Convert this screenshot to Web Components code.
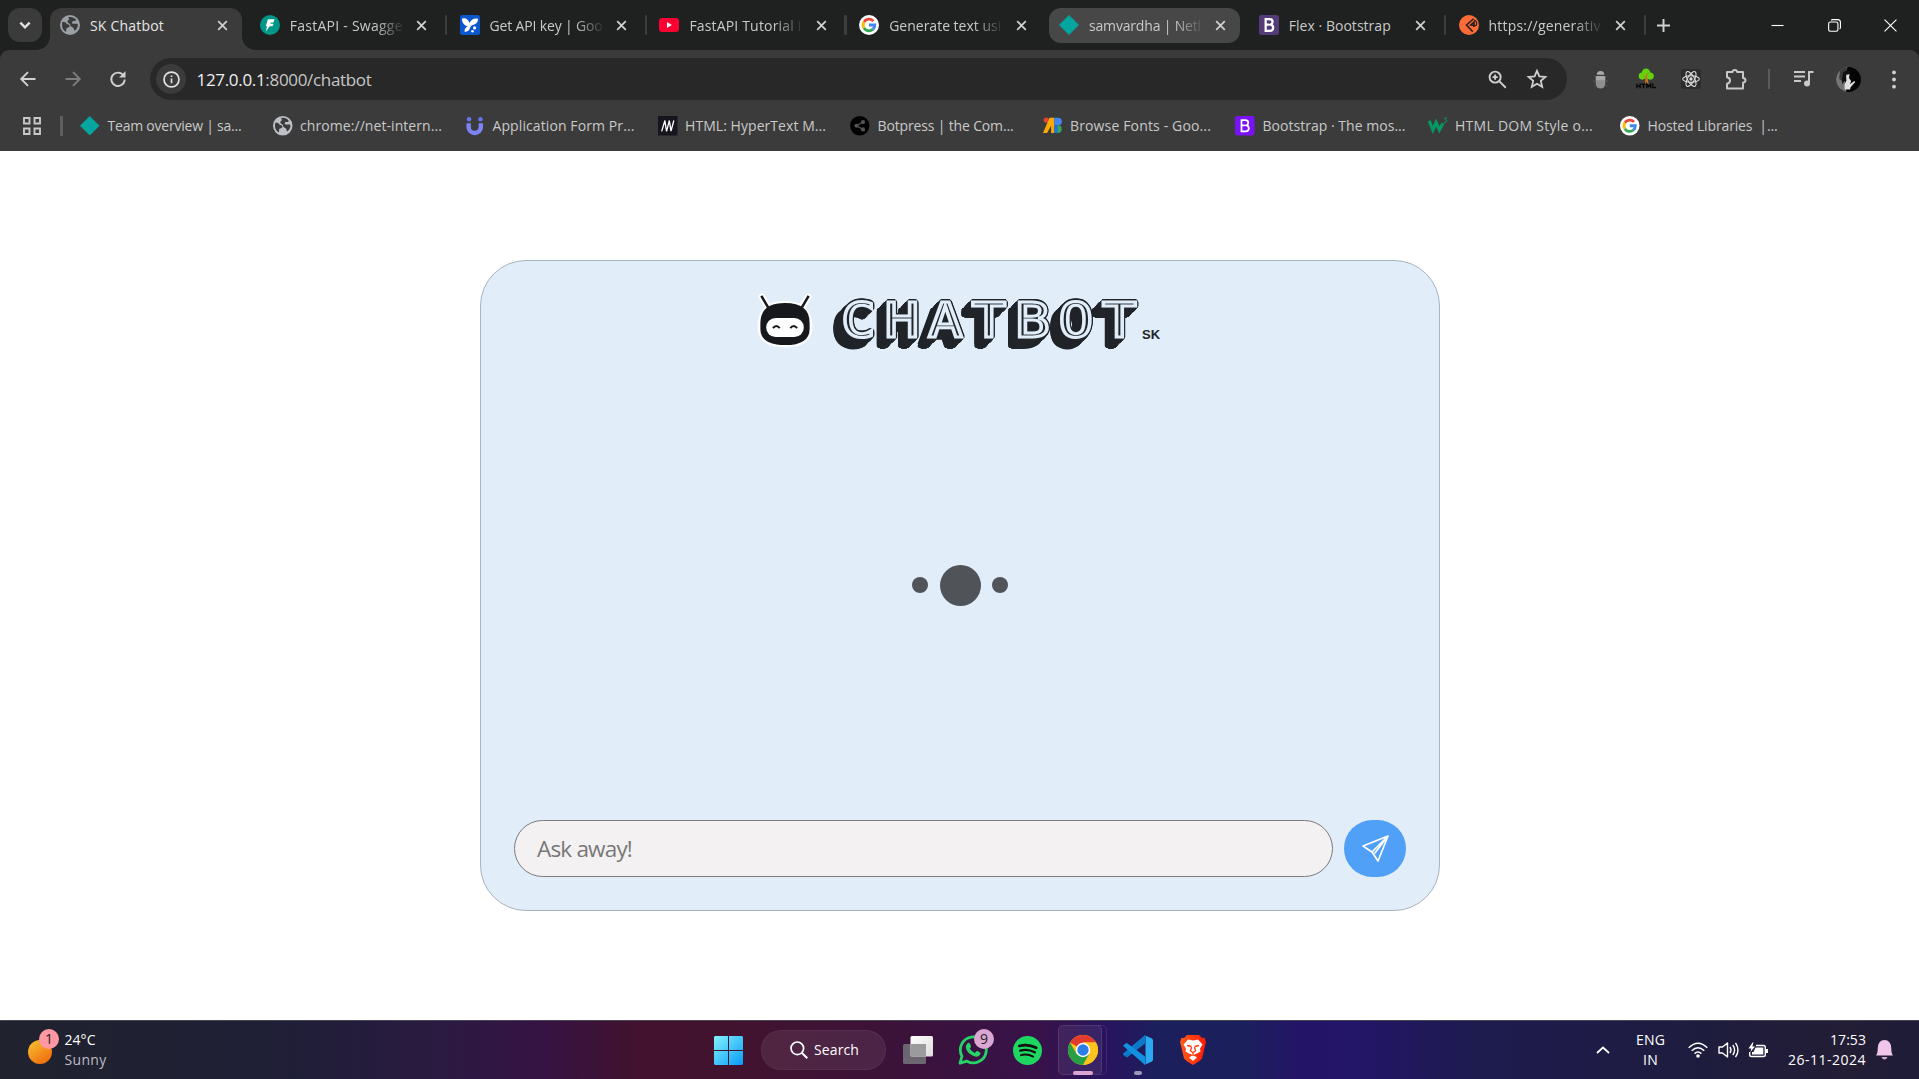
<!DOCTYPE html>
<html lang="en">
<head>
<meta charset="utf-8">
<title>SK Chatbot</title>
<style>
html,body{margin:0;height:100%;background:#fff;overflow:hidden}
body{font-family:"Open Sans","Noto Sans",sans-serif}
</style>
</head>
<body>
<desktop-screen></desktop-screen>
<script>
const S = (vb, body) => `<svg viewBox="${vb}" fill="none" xmlns="http://www.w3.org/2000/svg">${body}</svg>`;
const G = `<circle cx="12" cy="12" r="12" fill="#fff"/><g fill="none" stroke-width="3.4"><path d="M17.2 7.3A7 7 0 0 0 6 8.4" stroke="#ea4335"/><path d="M6 8.4a7 7 0 0 0 0 7.2" stroke="#fbbc05"/><path d="M6 15.6a7 7 0 0 0 10.6 1.7" stroke="#34a853"/><path d="M12 12h6.9a7 7 0 0 1-2.3 5.3" stroke="#4285f4"/></g>`;
const globe = c => `<circle cx="12" cy="12" r="12" fill="${c}"/><path d="M3 8c3 0 4 1 5 2.500s3 .5 3.500 2-1 2.500-3 3 0 4-1.500 4.500C3 18 1.500 13 3 8zM10 2.500c4-.8 7.500.6 9.500 3.500-1.500 2-2.500 1-4 1.500s-1.500 2.500 0 3 4-.5 6 .5c.2 3-1.500 6.500-4 8-1-1-.5-3-2-4s-3-1-3-3-3-2-3.500-4 2-2 2-3z" fill="#3b3b3b"/>`;
const ICONS = {
 down: S('0 0 12 12','<path d="M2 4l4 4 4-4" stroke="#e3e3e3" stroke-width="2"/>'),
 x: S('0 0 12 12','<path d="M1.300 1.300l9.400 9.400M10.700 1.300l-9.400 9.400" stroke="#d0d0d0" stroke-width="1.900"/>'),
 plus: S('0 0 12 12','<path d="M6 0v12M0 6h12" stroke="#d0d0d0" stroke-width="1.800"/>'),
 min: S('0 0 14 14','<path d="M.5 7h13" stroke="#fff" stroke-width="1.200"/>'),
 max: S('0 0 14 14','<rect x=".7" y="3.200" width="10" height="10" rx="1.800" stroke="#fff" stroke-width="1.200"/><path d="M3.500 1.500Q4 .7 5 .7h5.500a3 3 0 0 1 2.900 3V9q0 1.200-.8 1.700" stroke="#fff" stroke-width="1.200"/>'),
 winx: S('0 0 14 14','<path d="M.6.6l12.800 12.800M13.400.6L.6 13.400" stroke="#fff" stroke-width="1.200"/>'),
 globeA: S('0 0 24 24',globe('#9aa0a6')), globeB: S('0 0 24 24',globe('#bdc1c6')),
 fast: S('0 0 24 24','<circle cx="12" cy="12" r="12" fill="#009688"/><path d="M9.500 5h8l-1.500 4h-3l-.5 1.500h4L15 13.500h-3.500L7 20l1.500-6.500H7z" fill="#fff"/>'),
 apikey: S('0 0 24 24','<rect width="24" height="24" rx="3" fill="#0b57d0"/><path d="M2.500 4.500C6 3 10 5 11.500 9.500 13 6 17 3 21.500 4.500c.5 4-2.500 7-6.500 7.500-1.500.5-2.500 2-3 3.500-1 3.500-3.500 5-6.500 4.500-.5-2.500 1-5 4-6.500C5.500 13 2 9 2.500 4.500z" fill="#fff"/><circle cx="17.500" cy="15.500" r="1.900" fill="#fff"/><circle cx="15" cy="19.500" r="1.500" fill="#fff"/>'),
 yt: S('0 0 24 24','<rect y="3.500" width="24" height="17" rx="4" fill="#ff0033"/><path d="M9.500 8.500v7l6-3.500z" fill="#fff"/>'),
 g: S('0 0 24 24',G),
 teal: S('0 0 24 24','<path d="M12 .5L23.500 12 12 23.500.5 12z" fill="#05a5a0" stroke="#05a5a0" stroke-linejoin="round"/>'),
 b1: S('0 0 24 24','<rect width="24" height="24" rx="3" fill="#533b78"/><path d="M8 5h4.500q3.800 0 3.800 3.200 0 2.500-2.300 3.300 3 .6 3 3.700 0 3.800-4.300 3.800H8zM8 11.600h4M12.600 5" stroke="#fff" stroke-width="2.700"/>'),
 b2: S('0 0 24 24','<rect width="24" height="24" rx="3" fill="#7a12f8"/><path d="M8 5h4.500q3.800 0 3.800 3.200 0 2.500-2.300 3.300 3 .6 3 3.700 0 3.800-4.300 3.800H8zM8 11.600h4" stroke="#fff" stroke-width="2.200"/>'),
 orange: S('0 0 24 24','<circle cx="12" cy="12" r="12" fill="#ff6c37"/><path d="M17.500 4.500L9 12l7.500 8M14 12l4-3.500v4z" stroke="#26201e" stroke-width="1.900"/><path d="M18 6q4 1 3 6l-4 2" stroke="#26201e" stroke-width="1.500"/>'),
 back: S('0 0 16 16','<path d="M15.500 8H1.500M8 1.200L1.200 8 8 14.800" stroke="#d0d0d0" stroke-width="1.900"/>'),
 fwd: S('0 0 16 16','<path d="M.5 8h14M8 1.200L14.800 8 8 14.800" stroke="#7d7d7d" stroke-width="1.900"/>'),
 reload: S('0 0 16 16','<path d="M13.600 4.600A6.700 6.700 0 1 0 14.700 8.500" stroke="#d0d0d0" stroke-width="1.900"/><path d="M15.500 0v6.500H9z" fill="#d0d0d0"/>'),
 info: S('0 0 18 18','<circle cx="9" cy="9" r="7.900" stroke="#e3e3e3" stroke-width="1.800"/><path d="M9 8v5M9 4.700v1.700" stroke="#e3e3e3" stroke-width="1.700"/>'),
 zoom: S('0 0 20 20','<circle cx="7.500" cy="7.500" r="5.800" stroke="#d0d0d0" stroke-width="2"/><path d="M12 12l6.700 6.700M7.500 4.700v5.600M4.700 7.500h5.600" stroke="#d0d0d0" stroke-width="2"/>'),
 star: S('0 0 20 20','<path d="M10 1.800l2.400 5.600 6 .5-4.600 4 1.400 5.900L10 14.700l-5.200 3.100 1.400-5.900-4.600-4 6-.5z" stroke="#d0d0d0" stroke-width="1.800"/>'),
 bug: S('0 0 24 24','<g stroke="#5c5c5c" stroke-width="1"><path d="M4 7l4 4M20 7l-4 4M2 14h6M22 14h-6M4 21l4-4M20 21l-4-4"/></g><path d="M7.300 6a4.700 4.700 0 0 1 9.400 0z" fill="#aaa"/><rect x="6" y="7.500" width="12" height="16" rx="6" fill="#8e8e8e"/><path d="M6 9q0-1.500 1.500-1.500h9Q18 7.500 18 9v4H6z" fill="#a8a8a8"/>'),
 tree: S('0 0 24 24','<path d="M11 10h3l1 8h-4z" fill="#c4771e"/><g fill="#62d40b"><circle cx="12" cy="4.500" r="5"/><circle cx="7.500" cy="8.500" r="4.300"/><circle cx="17" cy="8.500" r="4.300"/></g><path d="M12.500 14V7l3-2M12.500 11L9 8" stroke="#c4771e" stroke-width="1.300"/><g stroke="#080808" stroke-width="1.700"><path d="M1 17.500v5.500M5 17.500v5.500M1 20.300h4M6.500 18.300h5M9 18v5M13 23v-5l2.200 3 2.300-3v5M20 17.500v4.700h4"/></g>'),
 react: S('0 0 24 24','<rect width="24" height="24" rx="3" fill="#2d2d2d"/><g stroke="#ddd" stroke-width="1.300"><ellipse cx="12" cy="12" rx="10" ry="4"/><ellipse cx="12" cy="12" rx="10" ry="4" transform="rotate(60 12 12)"/><ellipse cx="12" cy="12" rx="10" ry="4" transform="rotate(120 12 12)"/></g><circle cx="12" cy="12" r="2" fill="#ddd"/>'),
 puzzle: S('0 0 22 22','<path d="M2 4h5.500q.2-2 2.300-2t2.300 2H18v6q2.500.3 2.500 2.300T18 14.800V20.500H2v-4.800q3-.5 3-3.200t-3-3.200z" stroke="#c8c8c8" stroke-width="2" stroke-linejoin="round"/>'),
 music: S('0 0 20 20','<path d="M0 3h11M0 7.500h11M0 12h7" stroke="#c8c8c8" stroke-width="2"/><path d="M15 14.500V3h4.500" stroke="#c8c8c8" stroke-width="2"/><circle cx="13" cy="14.500" r="3" fill="#c8c8c8"/>'),
 avatar: S('0 0 24 24','<defs><clipPath id="c"><circle cx="12" cy="12" r="12"/></clipPath></defs><g clip-path="url(#c)"><path d="M0 0h24v24H0z" fill="#050505"/><path d="M0 0h11L8 10l2 14H0z" fill="#747474"/><path d="M4 3q3-3 7-2l-3 5-2 8-3-3z" fill="#3a3a3a"/><path d="M9.500 6.500q2.500-1.500 3.500.5l-.5 3.500 2 3-1 3 4-3 1 1-4.500 5-.5 2H8.500q-1-5 1.500-8.500z" fill="#e0e0e0"/><path d="M7 5q3-3 6.500-.5l-.5 2.500-3 .5-1 5-3 4q-1-6 1-11.500z" fill="#111"/></g>'),
 dots: S('0 0 4 20','<g fill="#d0d0d0"><circle cx="2" cy="2.500" r="2"/><circle cx="2" cy="10" r="2"/><circle cx="2" cy="17.500" r="2"/></g>'),
 grid: S('0 0 18 18','<g stroke="#c8c8c8" stroke-width="1.900"><path d="M1 1h5.500v5.500H1zM11.500 1H17v5.500h-5.500zM1 11.500h5.500V17H1zM11.500 11.500H17V17h-5.500z"/></g>'),
 u: S('0 0 24 24','<path d="M4.500 9v4.500a7.500 7.500 0 0 0 15 0V9" stroke="#7b83f5" stroke-width="5.500"/><circle cx="5" cy="4" r="2.800" fill="#6673f0"/><circle cx="19" cy="4" r="2.800" fill="#6673f0"/>'),
 m: S('0 0 24 24','<path d="M0 0h24v24H0z" fill="#15141f"/><path d="M4.500 19L8.500 5.500M10.500 19L14 5.500M16 18.500L19.500 5.500M8.500 6l2 13M14 6l2 12.500" stroke="#fff" stroke-width="1.600"/>'),
 bot: S('0 0 24 24','<circle cx="12" cy="12" r="12" fill="#000"/><path d="M15 8l-7 4 7 4" stroke="#555" stroke-width="1.500"/><g fill="#555"><circle cx="16" cy="7.500" r="2.600"/><circle cx="8" cy="12" r="2.600"/><circle cx="16" cy="16.500" r="2.600"/></g>'),
 fonts: S('0 0 24 24','<circle cx="4" cy="5" r="3.200" fill="#ea4335"/><path d="M8 2h6v19h-4V12L5 21H0z" fill="#fbaa05"/><path d="M14 2h4.500a4.500 4.500 0 0 1 0 9.500H14z" fill="#4285f4"/><path d="M14 11.500h4.500a5 5 0 0 1 0 9.500H14z" fill="#1a73e8"/><path d="M18 11a5 5 0 0 1 0 10z" fill="#34a853"/>'),
 w3: S('0 0 24 24','<path d="M1.500 6l4.500 11 4-9 4 9 4.500-8" stroke="#059862" stroke-width="4"/><path d="M19.500 2.500H23l-2 2q2 0 2 2t-3.500 1.300" stroke="#059862" stroke-width="1.200"/>'),
 send: S('0 0 27 27','<path d="M26 1L1 11l9 6 6 9zM10 17L26 1L12.500 18.500" stroke="#fff" stroke-width="1.700" stroke-linejoin="round"/>'),
 robot: S('0 0 58 58','<g stroke="#fff" stroke-width="7" stroke-linejoin="round" stroke-linecap="round" opacity=".9"><path d="M5 5l6 10M53 5l-6 10"/><path d="M4 36q0-23.500 25-23.500t25 23.500q0 18-25 18T4 36z"/></g><path d="M4.500 4l7 12M53.500 4l-7 12" stroke="#17181b" stroke-width="2.600"/><path d="M3.500 32q0-20.500 25.500-20.500t25.500 20.500v6q0 17-25.500 17T3.500 38z" fill="#17181b"/><rect x="9.500" y="27" width="39" height="19.500" rx="9.700" fill="#fff"/><path d="M16.500 37.500q3.500-4.500 7 0M34.500 37.500q3.500-4.500 7 0" stroke="#17181b" stroke-width="2"/>'),
 sun: S('0 0 24 24','<defs><linearGradient id="s" x1="0" y1="0" x2=".7" y2="1"><stop stop-color="#f8c535"/><stop offset="1" stop-color="#ef6c0c"/></linearGradient></defs><circle cx="12" cy="12" r="12" fill="url(#s)"/>'),
 win: S('0 0 29 29','<defs><linearGradient id="w" x1="0" y1="0" x2="1" y2="1"><stop stop-color="#84f1fd"/><stop offset="1" stop-color="#079cf8"/></linearGradient></defs><path d="M1 0h13v14H0V1zM15 0h13l1 1v13H15zM0 15h14v14H1l-1-1zM15 15h14v13l-1 1H15z" fill="url(#w)"/>'),
 loupe: S('0 0 18 18','<circle cx="7.300" cy="7.300" r="6.300" stroke="#fff" stroke-width="1.700"/><path d="M12 12l5.300 5.300" stroke="#fff" stroke-width="2"/>'),
 task: S('0 0 30 28','<defs><linearGradient id="t" x1="0" y1="0" x2="1" y2="1"><stop stop-color="#fff"/><stop offset="1" stop-color="#ddd"/></linearGradient></defs><rect x="0" y="8" width="23" height="20" rx="1.500" fill="#6b6670"/><rect x="7.500" y="0" width="22.500" height="20.500" rx="1.500" fill="url(#t)"/><path d="M7.500 8H23v12.500H7.500z" fill="#9b9b9d"/>'),
 wa: S('0 0 30 30','<path d="M2 28.200l2-7A13 13 0 1 1 9 26.200z" stroke="#25d366" stroke-width="2.800" stroke-linejoin="round"/><path d="M9.200 8.500q1.800-1.500 2.800.2l1 2.700q0 1-1.200 2 1.700 3.300 5 4.500l1.700-1.700q.6-.4 3.500 1.300 1 .8 0 2.300-2 3-6.500 1.200Q9.500 18.500 8 13.500q-.5-3 1.200-5z" fill="#25d366"/>'),
 spot: S('0 0 30 30','<circle cx="15" cy="15" r="15" fill="#1ed760"/><g stroke="#111" stroke-linecap="round"><path d="M6.500 10.300q9-2.600 17.500 1.900" stroke-width="2.800"/><path d="M7.500 15.200q7.800-2.200 15 1.700" stroke-width="2.400"/><path d="M8.200 19.800q6.500-1.700 12.700 1.500" stroke-width="2"/></g>'),
 chrome: S('0 0 30 30','<circle cx="15" cy="15" r="15" fill="#fcc31e"/><path d="M15 15L2 7.500A15 15 0 0 1 28 7.500H15z" fill="#e33b2e"/><path d="M2 7.500L8.500 18.750 15 22l6.500-3.250L15 30A15 15 0 0 1 2 7.500z" fill="#27a045"/><path d="M15 7.500h13A15 15 0 0 1 15 30l6.500-11.250z" fill="#fcc31e"/><circle cx="15" cy="15" r="7.200" fill="#fff"/><circle cx="15" cy="15" r="5.700" fill="#2b7de9"/>'),
 vs: S('0 0 30 30','<path d="M22 0v8.500L4 22.500 0 19.800v-1.200z" fill="#0b78c8"/><path d="M0 10.700L3.500 7.800 22 21.500V30z" fill="#1191df"/><path d="M21 0l8 3.500 1 1.500v20l-1 1.500L21 30q1.500-.5 1.500-2V2Q22.500.5 21 0z" fill="#2aaaf2"/>'),
 brave: S('0 0 26 30','<defs><linearGradient id="b"><stop stop-color="#ff5a16"/><stop offset="1" stop-color="#ff1a08"/></linearGradient></defs><path d="M7 0h12l3 3 2.500-.2L26 7l-.8 3-3.200 13.500Q20 26 13 30 6 26 4 23.500L.8 10 0 7l1.500-4.200L4 3z" fill="url(#b)"/><path d="M8 4.500l5 1 5-1 4.500 5-2.500 4 .5 3-3.500 2-4 1.500L9 18.500l-3.500-2 .5-3-2.500-4z" fill="#fff"/><path d="M13 20l4 2.500-4 3.500-4-3.500z" fill="#fff"/><path d="M7 10.500l4.500 1M19 10.500l-4.500 1M11.500 12l-1 4 2.500 1.500 2.500-1.500-1-4M13 18v3" stroke="#ff3b10" stroke-width="1.300"/>'),
 up: S('0 0 14 8','<path d="M1 7l6-5.500L13 7" stroke="#fff" stroke-width="1.700"/>'),
 wifi: S('0 0 20 16','<g stroke="#fff" stroke-width="1.500"><path d="M.7 5.800q9.300-9.200 18.600 0M3.700 8.800q6.300-6.200 12.600 0M6.600 11.600q3.400-3.200 6.800 0"/></g><circle cx="10" cy="14" r="1.800" fill="#fff"/>'),
 vol: S('0 0 21 18','<path d="M1 6h3.500L9.500 2v14L4.500 12H1z" stroke="#fff" stroke-width="1.400" stroke-linejoin="round"/><path d="M12 6q2 3 0 6M14.800 4q3.600 5 0 10M17.500 1.800q5 7.200 0 14.400" stroke="#fff" stroke-width="1.400"/>'),
 bat: S('0 0 20 16','<path d="M8 3h7.500q1.800 0 1.800 1.800v7.400q0 1.800-1.800 1.800H3.500q-1.800 0-1.800-1.800V9.500" stroke="#fff" stroke-width="1.400"/><path d="M7.500 5h7.800v7H4v-2.500h1.500z" fill="#fff"/><path d="M18 6.500h2v4h-2zM4.500 0L.5 6h2.800L2.500 9.500 7 4H4.300L5.500 0z" fill="#fff"/>'),
 bell: S('0 0 17 20','<path d="M0 15.500q1.700-2 1.700-7Q2 0 8.500 0t6.800 8.500q0 5 1.700 7z" fill="#efc5ea"/><path d="M5.500 17h6q-1 2.500-3 2.500t-3-2.500z" fill="#d9a5d5"/>')
};
const define = (name, css, html, after) => customElements.define(name, class extends HTMLElement {
  connectedCallback() {
    if (this.shadowRoot) return;
    const root = this.attachShadow({mode: 'open'});
    root.innerHTML = `<style>${css}</style>` + (typeof html === 'function' ? html(this) : html);
    if (after) after(this, root);
  }
});
const at = (el, n, d = '') => el.getAttribute(n) ?? d;

define('ui-icon', ':host{display:block;flex:none}svg{display:block;width:100%;height:100%;overflow:visible}',
  el => ICONS[at(el, 'name')],
  el => { el.style.width = at(el, 'w', '20') + 'px'; el.style.height = at(el, 'h', at(el, 'w', '20')) + 'px'; });

// Text tracked so that it fills the width given in "w".
define('fit-text', ':host{display:block;flex:none;white-space:pre}span{display:inline-block}', '<span><slot></slot></span>',
  (el, root) => {
    const s = root.querySelector('span'), w = +at(el, 'w'), n = el.textContent.length;
    s.style.letterSpacing = (w - s.getBoundingClientRect().width) / n + 'px';
    el.style.width = w + 'px';
  });

define('browser-tab', `
:host{display:flex;align-items:center;width:199.8px;height:50px;flex:none;color:#c9c9c9;font-size:14px;line-height:20px}
.in{display:flex;align-items:center;box-sizing:border-box;width:191.500px;height:35px;padding:0 10px;border-radius:12px;flex:none}
:host([state=hover]) .in{background:#474747}
:host([state=active]) .in{background:#3b3b3b;height:42px;border-radius:12px 12px 0 0;margin-top:8px;position:relative;color:#e6e6e6}
:host([state=active]) .in::before,:host([state=active]) .in::after{content:"";position:absolute;bottom:0;width:13px;height:13px}
:host([state=active]) .in::before{right:100%;background:radial-gradient(circle at 0 0,transparent 12.500px,#3b3b3b 13px)}
:host([state=active]) .in::after{left:100%;background:radial-gradient(circle at 100% 0,transparent 12.500px,#3b3b3b 13px)}
:host([state=active]) .in>*{margin-bottom:8px}
.t{width:113px;margin-left:10px;padding-top:1px;overflow:hidden;flex:none}
:host([fade]) .t{-webkit-mask:linear-gradient(90deg,#000 75%,transparent 102%)}
.c{margin-left:13.500px}
i{width:2.500px;height:20px;border-radius:1px;background:#3c3e3d;margin-left:3.500px;flex:none;visibility:hidden}
:host([sep]) i{visibility:visible}`,
  el => `<div class="in"><ui-icon name="${at(el,'icon')}" w="${at(el,'iw','20')}"></ui-icon><div class="t"><fit-text w="${at(el,'tw')}">${at(el,'label')}</fit-text></div><ui-icon class="c" name="x" w="11"></ui-icon></div><i></i>`);

const tabs = [['globeA','SK Chatbot',74,'state="active"'],['fast','FastAPI - Swagge',113,'fade sep'],['apikey','Get API key | Goo',113,'fade sep'],['yt','FastAPI Tutorial i',112,'fade sep'],['g','Generate text usi',112,'fade'],['teal','samvardha | Netl',112,'fade state="hover"'],['b1','Flex · Bootstrap',102,'sep'],['orange','https://generativ',112,'fade sep']];
define('tab-strip', `
:host{display:flex;align-items:center;height:50px;background:#1f2120}
.m{display:flex;align-items:center;justify-content:center;width:34px;height:34px;border-radius:12px;background:#3b3b3b;margin:0 8px}
.p{margin-left:8.500px}.w{display:flex;margin-left:auto;align-items:center;width:170px}
.w>div{width:57px;display:flex;justify-content:center}`,
  `<div class="m"><ui-icon name="down" w="14"></ui-icon></div>` +
  tabs.map(t => `<browser-tab icon="${t[0]}" label="${t[1]}" tw="${t[2]}" ${t[3]}></browser-tab>`).join('') +
  `<ui-icon class="p" name="plus" w="13"></ui-icon><div class="w"><div><ui-icon name="min" w="13"></ui-icon></div><div><ui-icon name="max" w="13"></ui-icon></div><div><ui-icon name="winx" w="13"></ui-icon></div></div>`);

define('address-bar', `
:host{display:flex;align-items:center;height:58px;background:#3b3b3b;border-radius:9px 9px 0 0}
.n,.e{display:flex;align-items:center;justify-content:center;width:45px;flex:none}
.nav{display:flex;padding-left:5px;width:145px}
.o{display:flex;align-items:center;box-sizing:border-box;width:1417px;height:42px;border-radius:21px;background:#282828;padding-left:6px;font-size:17px;color:#c7c7c7}
.i{width:30px;height:30px;border-radius:50%;background:#3b3b3b;display:flex;align-items:center;justify-content:center;margin-right:10.500px}
b{font-weight:400;color:#f0f0f0}.z{margin-left:auto;margin-right:20.500px}.s{margin-right:20px}
.x{display:flex;margin-left:11px}.d{width:2px;height:20px;background:#5c5c5c;margin:0 11px 0 10px}`,
  `<div class="nav"><div class="n"><ui-icon name="back" w="16"></ui-icon></div><div class="n"><ui-icon name="fwd" w="16"></ui-icon></div><div class="n"><ui-icon name="reload" w="16"></ui-icon></div></div>
<div class="o"><div class="i"><ui-icon name="info" w="17"></ui-icon></div><fit-text w="175"><b>127.0.0.1</b>:8000/chatbot</fit-text><ui-icon class="z" name="zoom" w="19"></ui-icon><ui-icon class="s" name="star" w="20"></ui-icon></div>
<div class="x"><div class="e"><ui-icon name="bug" w="19"></ui-icon></div><div class="e"><ui-icon name="tree" w="20"></ui-icon></div><div class="e"><ui-icon name="react" w="20"></ui-icon></div><div class="e"><ui-icon name="puzzle" w="22"></ui-icon></div></div><div class="d"></div>
<div class="e"><ui-icon name="music" w="20"></ui-icon></div><div class="e"><ui-icon name="avatar" w="25"></ui-icon></div><div class="e"><ui-icon name="dots" w="4" h="19"></ui-icon></div>`);

const marks = [['teal','Team overview | sa...',134],['globeB','chrome://net-intern...',142],['u','Application Form Pr...',142],['m','HTML: HyperText M...',141],['bot','Botpress | the Com...',136],['fonts','Browse Fonts - Goo...',141],['b2','Bootstrap · The mos...',143],['w3','HTML DOM Style o...',138],['g','Hosted Libraries  |...',130]];
define('bookmark-item', ':host{display:flex;align-items:center;gap:8px;width:192.5px;flex:none}',
  el => `<ui-icon name="${at(el,'icon')}" w="19.5"></ui-icon><fit-text w="${at(el,'tw')}">${at(el,'label')}</fit-text>`);
define('bookmarks-bar', ':host{display:flex;align-items:center;height:43px;padding-bottom:8px;box-sizing:border-box;background:#3b3b3b;color:#c9c9c9;font-size:14px;line-height:20px}.g{margin-left:23px}.d{width:2.500px;height:20px;background:#5e5e5e;margin:0 17.500px 0 19px}',
  `<ui-icon class="g" name="grid" w="18"></ui-icon><div class="d"></div>` + marks.map(m => `<bookmark-item icon="${m[0]}" label="${m[1]}" tw="${m[2]}"></bookmark-item>`).join(''));

// Extruded block shade: a ring round the glyph, repeated down and to the left.
const shade = [];
for (let k = 0; k <= 8.5; k += .85) for (let a = 0; a < 16; a++)
  shade.push(`${(2.6 * Math.cos(a * Math.PI / 8) - k / 1.2).toFixed(2)}px ${(3 * Math.sin(a * Math.PI / 8) + k).toFixed(2)}px 0 #212529`);
define('chat-title', `
:host{display:flex;height:60px;align-items:flex-start;padding-left:243px}
h1{margin:0 50.500px 0 27.500px;font:400 48px/56px "DejaVu Sans Mono",monospace;letter-spacing:7.350px;width:251px;white-space:nowrap;color:#212529;-webkit-text-stroke:3px #e1edf9;text-shadow:${shade.join(',')};transform:scaleX(1.200);transform-origin:0 0}
small{margin:35px 0 0 0;font:700 13px/16px "Liberation Sans",Arial,sans-serif;color:#212529}`,
  `<ui-icon name="robot" w="56"></ui-icon><h1>CHATBOT</h1><small>SK</small>`);
define('loading-dots', ':host{display:flex;align-items:center;justify-content:center;gap:11.500px}i{width:16px;height:16px;border-radius:50%;background:#505358}.b{width:41px;height:41px}', '<i></i><i class="b"></i><i></i>');
define('chat-input', `
:host{display:flex;gap:11px;height:57px}
.f{box-sizing:border-box;width:819px;height:57px;border:1px solid #7b7b7b;border-radius:29px;background:#f4f1f2;display:flex;align-items:center;padding-left:22px;font-size:22.500px;color:#787878}
button{width:62px;height:57px;border:0;padding:0;border-radius:29px;background:#50a0f7;display:flex;align-items:center;justify-content:center}`,
  `<div class="f"><fit-text w="95">Ask away!</fit-text></div><button aria-label="Send"><ui-icon name="send" w="27"></ui-icon></button>`);
define('chat-card', `
:host{box-sizing:border-box;display:flex;flex-direction:column;width:960px;height:651px;border:1px solid #a8b4c0;border-radius:46px;background:#e1edf9;padding:31px 33px 33px}
loading-dots{flex:1;margin-top:-2px}`,
  `<chat-title></chat-title><loading-dots></loading-dots><chat-input></chat-input>`);

define('task-app', `
:host{display:flex;align-items:center;justify-content:center;width:55px;height:58px;flex:none;position:relative}
.u{position:absolute;bottom:4px;height:4px;border-radius:2px;background:#9a97b8;width:8px}
:host([on]) .u{width:20px;background:#dba6d4}
.k,.k2{position:absolute;box-sizing:border-box;height:50px;border-radius:5px;border:1px solid #ffffff18;background:#ffffff12}
.k{width:44px;left:3px;top:4px}.k2{width:9px;left:43px;top:4px;border-left:0;background:none;border-radius:0 5px 5px 0}
ui-icon{position:relative}
.bd{position:absolute;right:6px;top:8px;width:20px;height:20px;border-radius:50%;background:#dba6d4;color:#222;font-size:14px;line-height:20px;text-align:center}`,
  el => (el.hasAttribute('on') ? '<div class="k"></div><div class="k2"></div>' : '') + `<ui-icon name="${at(el,'icon')}" w="${at(el,'w','29')}" h="${at(el,'h',at(el,'w','29'))}"></ui-icon>` + (el.hasAttribute('run') ? '<div class="u"></div>' : '') + (el.hasAttribute('badge') ? `<div class="bd">${at(el,'badge')}</div>` : ''));
define('task-bar', `
:host{display:flex;align-items:center;box-sizing:border-box;height:59px;border-top:1px solid #474552;color:#fff;font-size:14px;line-height:20px;background:linear-gradient(90deg,#20222e 0,#1f2035 240px,#201e38 310px,#2b1a42 440px,#351343 540px,#42122f 640px,#42132f 730px,#3b1239 900px,#38124a 1040px,#28145f 1110px,#1b205c 1160px,#1b205c 1240px,#241468 1300px,#231569 1350px,#1e1b50 1470px,#1e1c3e 1700px,#231d35 1850px,#1e1c38 1919px)}
.wx{display:flex;width:701px;padding-left:28px;box-sizing:border-box;flex:none}
.su{position:relative;margin:5px 12.500px 0 0}.bd{position:absolute;left:11px;top:-6px;width:20px;height:20px;border-radius:50%;background:#ff98a2;color:#222;text-align:center;font-size:14px}
.su ui-icon{margin-top:5px}
.lt{color:#bdbdc5}
.s{display:flex;align-items:center;box-sizing:border-box;width:125px;height:40px;border-radius:20px;background:#ffffff14;border:1px solid #ffffff0c;padding-left:28px;gap:6px;margin:0 4px 0 5px}
.r{margin-left:auto;display:flex;align-items:center}
.lang{margin:0 23px 0 26.500px;display:flex;flex-direction:column;align-items:center}
.ic{display:flex;gap:9.500px;align-items:center;margin-right:20px}
.dt{display:flex;flex-direction:column;align-items:flex-end;margin-right:10px}
.b{margin-right:26px}`,
  `<div class="wx"><div class="su"><ui-icon name="sun" w="24"></ui-icon><div class="bd">1</div></div><div><fit-text w="31">24°C</fit-text><fit-text class="lt" w="42">Sunny</fit-text></div></div>
<task-app icon="win"></task-app><div class="s"><ui-icon name="loupe" w="18"></ui-icon><fit-text w="45">Search</fit-text></div>
<task-app icon="task" w="30" h="28"></task-app><task-app icon="wa" w="30" badge="9"></task-app><task-app icon="spot" w="29"></task-app><task-app icon="chrome" w="30" on run></task-app><task-app icon="vs" w="30" run></task-app><task-app icon="brave" w="26" h="30"></task-app>
<div class="r"><ui-icon name="up" w="14" h="8"></ui-icon><div class="lang"><fit-text w="29">ENG</fit-text><fit-text w="15">IN</fit-text></div><div class="ic"><ui-icon name="wifi" w="20" h="16"></ui-icon><ui-icon name="vol" w="21" h="18"></ui-icon><ui-icon name="bat" w="20" h="17"></ui-icon></div><div class="dt"><fit-text w="36">17:53</fit-text><fit-text w="78">26-11-2024</fit-text></div><ui-icon class="b" name="bell" w="17" h="20"></ui-icon></div>`);

define('desktop-screen', `
:host{display:flex;flex-direction:column;width:1919px;height:1079px;background:#fff}
.top{background:#1f2120}
main{flex:1;display:flex;justify-content:center;align-items:flex-start;padding-top:109px;padding-left:1px}`,
  `<div class="top"><tab-strip></tab-strip><address-bar></address-bar><bookmarks-bar></bookmarks-bar></div><main><chat-card></chat-card></main><task-bar></task-bar>`);
</script>
</body>
</html>
